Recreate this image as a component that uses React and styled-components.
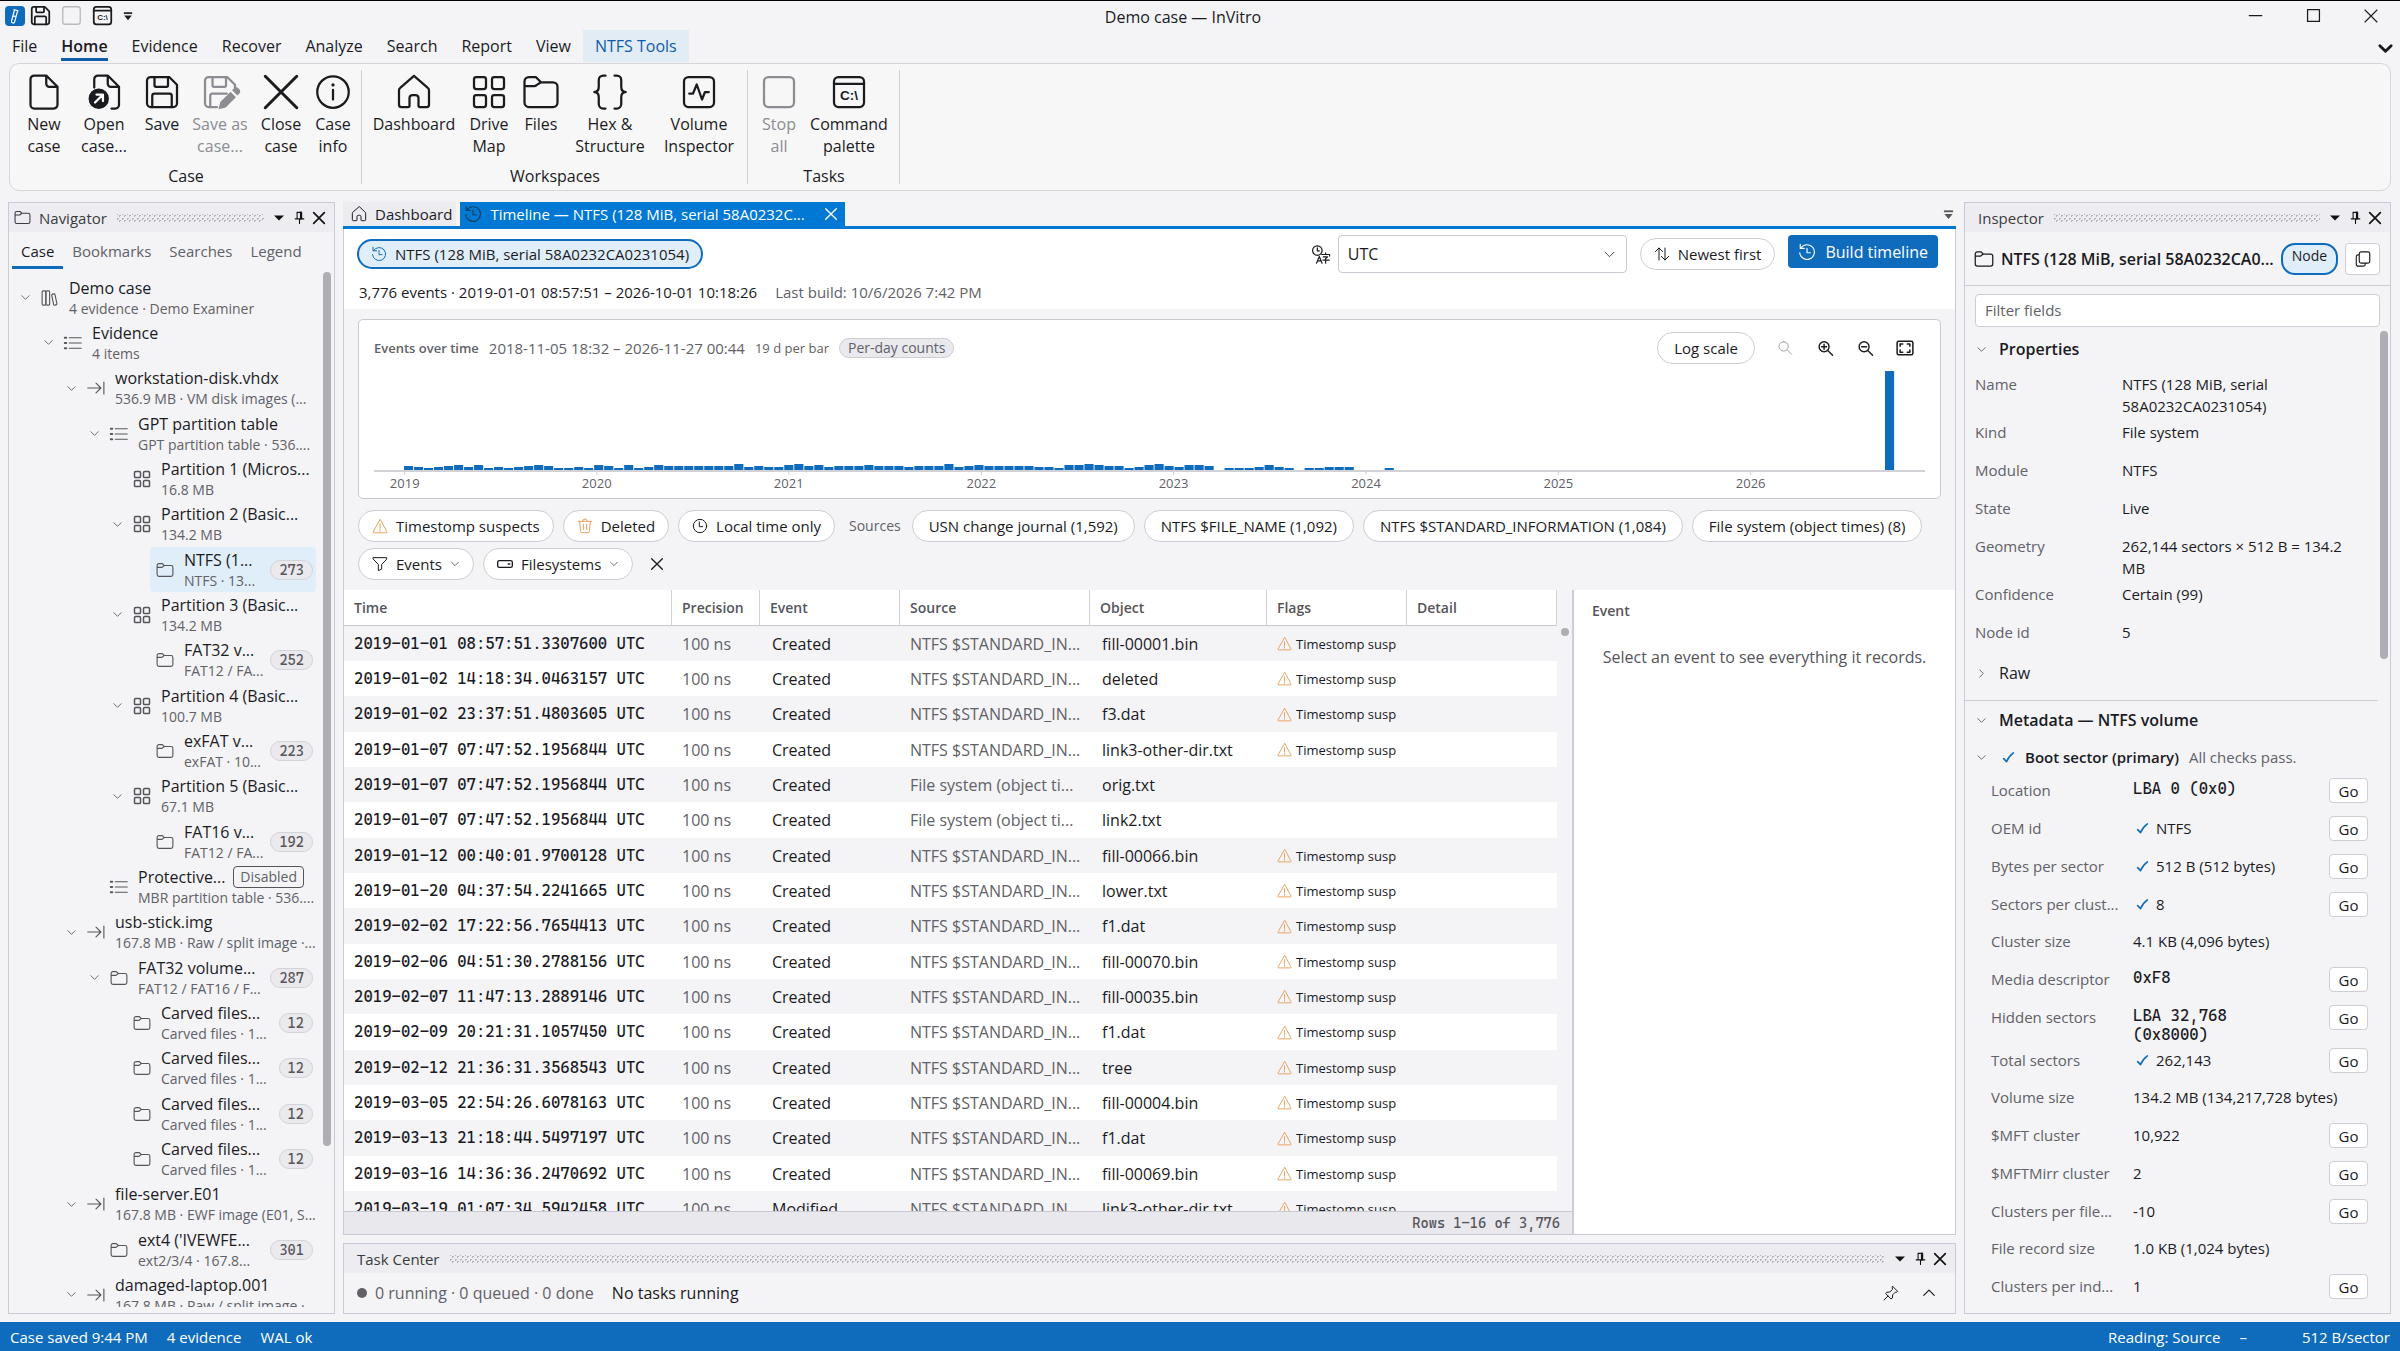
import React, { useState } from "react";
import styled, { createGlobalStyle, css } from "styled-components";

const sans = `"Segoe UI", "Open Sans", "Noto Sans", sans-serif`;
const mono = `"Cascadia Mono", "DejaVu Sans Mono", monospace`;

const ribbonGroups = [
  {
    name: "Case",
    buttons: [
      { icon: "doc", lines: ["New", "case"], width: 56 },
      { icon: "open", lines: ["Open", "case..."], width: 64 },
      { icon: "save", lines: ["Save"], width: 52 },
      { icon: "saveAs", lines: ["Save as", "case..."], width: 64, disabled: true },
      { icon: "closeBig", lines: ["Close", "case"], width: 58 },
      { icon: "info", lines: ["Case", "info"], width: 46 },
    ],
  },
  {
    name: "Workspaces",
    buttons: [
      { icon: "home", lines: ["Dashboard"], width: 92 },
      { icon: "grid", lines: ["Drive", "Map"], width: 58 },
      { icon: "folder", lines: ["Files"], width: 46 },
      { icon: "braces", lines: ["Hex &", "Structure"], width: 92 },
      { icon: "pulse", lines: ["Volume", "Inspector"], width: 86 },
    ],
  },
  {
    name: "Tasks",
    buttons: [
      { icon: "stop", lines: ["Stop", "all"], width: 50, disabled: true },
      { icon: "terminal", lines: ["Command", "palette"], width: 90 },
    ],
  },
];

const menu = ["File", "Home", "Evidence", "Recover", "Analyze", "Search", "Report", "View", "NTFS Tools"];

const tree = [
  { depth: 0, open: true, icon: "library", title: "Demo case", sub: "4 evidence · Demo Examiner" },
  { depth: 1, open: true, icon: "list", title: "Evidence", sub: "4 items" },
  { depth: 2, open: true, icon: "arrowBar", title: "workstation-disk.vhdx", sub: "536.9 MB · VM disk images (..." },
  { depth: 3, open: true, icon: "list", title: "GPT partition table", sub: "GPT partition table · 536...." },
  { depth: 4, icon: "grid", title: "Partition 1 (Micros...", sub: "16.8 MB" },
  { depth: 4, open: true, icon: "grid", title: "Partition 2 (Basic...", sub: "134.2 MB" },
  { depth: 5, icon: "folder", title: "NTFS (1...", sub: "NTFS · 13...", count: 273, selected: true },
  { depth: 4, open: true, icon: "grid", title: "Partition 3 (Basic...", sub: "134.2 MB" },
  { depth: 5, icon: "folder", title: "FAT32 v...", sub: "FAT12 / FA...", count: 252 },
  { depth: 4, open: true, icon: "grid", title: "Partition 4 (Basic...", sub: "100.7 MB" },
  { depth: 5, icon: "folder", title: "exFAT v...", sub: "exFAT · 10...", count: 223 },
  { depth: 4, open: true, icon: "grid", title: "Partition 5 (Basic...", sub: "67.1 MB" },
  { depth: 5, icon: "folder", title: "FAT16 v...", sub: "FAT12 / FA...", count: 192 },
  { depth: 3, icon: "list", title: "Protective...", sub: "MBR partition table · 536....", tag: "Disabled" },
  { depth: 2, open: true, icon: "arrowBar", title: "usb-stick.img", sub: "167.8 MB · Raw / split image ·..." },
  { depth: 3, open: true, icon: "folder", title: "FAT32 volume...", sub: "FAT12 / FAT16 / F...", count: 287 },
  { depth: 4, icon: "folder", title: "Carved files...", sub: "Carved files · 1...", count: 12 },
  { depth: 4, icon: "folder", title: "Carved files...", sub: "Carved files · 1...", count: 12 },
  { depth: 4, icon: "folder", title: "Carved files...", sub: "Carved files · 1...", count: 12 },
  { depth: 4, icon: "folder", title: "Carved files...", sub: "Carved files · 1...", count: 12 },
  { depth: 2, open: true, icon: "arrowBar", title: "file-server.E01", sub: "167.8 MB · EWF image (E01, S..." },
  { depth: 3, icon: "folder", title: "ext4 ('IVEWFE...", sub: "ext2/3/4 · 167.8...", count: 301 },
  { depth: 2, open: true, icon: "arrowBar", title: "damaged-laptop.001", sub: "167.8 MB · Raw / split image ·" },
];

const STD = "NTFS $STANDARD_IN...";
const FS = "File system (object ti...";
const events = [
  ["2019-01-01 08:57:51.3307600 UTC", "Created", STD, "fill-00001.bin", true],
  ["2019-01-02 14:18:34.0463157 UTC", "Created", STD, "deleted", true],
  ["2019-01-02 23:37:51.4803605 UTC", "Created", STD, "f3.dat", true],
  ["2019-01-07 07:47:52.1956844 UTC", "Created", STD, "link3-other-dir.txt", true],
  ["2019-01-07 07:47:52.1956844 UTC", "Created", FS, "orig.txt", false],
  ["2019-01-07 07:47:52.1956844 UTC", "Created", FS, "link2.txt", false],
  ["2019-01-12 00:40:01.9700128 UTC", "Created", STD, "fill-00066.bin", true],
  ["2019-01-20 04:37:54.2241665 UTC", "Created", STD, "lower.txt", true],
  ["2019-02-02 17:22:56.7654413 UTC", "Created", STD, "f1.dat", true],
  ["2019-02-06 04:51:30.2788156 UTC", "Created", STD, "fill-00070.bin", true],
  ["2019-02-07 11:47:13.2889146 UTC", "Created", STD, "fill-00035.bin", true],
  ["2019-02-09 20:21:31.1057450 UTC", "Created", STD, "f1.dat", true],
  ["2019-02-12 21:36:31.3568543 UTC", "Created", STD, "tree", true],
  ["2019-03-05 22:54:26.6078163 UTC", "Created", STD, "fill-00004.bin", true],
  ["2019-03-13 21:18:44.5497197 UTC", "Created", STD, "f1.dat", true],
  ["2019-03-16 14:36:36.2470692 UTC", "Created", STD, "fill-00069.bin", true],
  ["2019-03-19 01:07:34.5942458 UTC", "Modified", STD, "link3-other-dir.txt", true],
];

const columns = [
  { name: "Time", width: 328 },
  { name: "Precision", width: 88 },
  { name: "Event", width: 140 },
  { name: "Source", width: 190 },
  { name: "Object", width: 177 },
  { name: "Flags", width: 140 },
  { name: "Detail" },
];

const properties = [
  ["Name", "NTFS (128 MiB, serial 58A0232CA0231054)"],
  ["Kind", "File system"],
  ["Module", "NTFS"],
  ["State", "Live"],
  ["Geometry", "262,144 sectors × 512 B = 134.2 MB"],
  ["Confidence", "Certain (99)"],
  ["Node id", "5"],
];

const bootFields = [
  { label: "Location", value: "LBA 0 (0x0)", mono: true, go: true },
  { label: "OEM id", value: "NTFS", check: true, go: true },
  { label: "Bytes per sector", value: "512 B (512 bytes)", check: true, go: true },
  { label: "Sectors per clust...", value: "8", check: true, go: true },
  { label: "Cluster size", value: "4.1 KB (4,096 bytes)" },
  { label: "Media descriptor", value: "0xF8", mono: true, go: true },
  { label: "Hidden sectors", value: "LBA 32,768 (0x8000)", mono: true, go: true },
  { label: "Total sectors", value: "262,143", check: true, go: true },
  { label: "Volume size", value: "134.2 MB (134,217,728 bytes)" },
  { label: "$MFT cluster", value: "10,922", go: true },
  { label: "$MFTMirr cluster", value: "2", go: true },
  { label: "Clusters per file...", value: "-10", go: true },
  { label: "File record size", value: "1.0 KB (1,024 bytes)" },
  { label: "Clusters per ind...", value: "1", go: true },
];

// one digit per 19 day bucket, "0" is an empty bucket
const buckets =
  "000" +
  "4323453523234542232542523544444446343356" +
  "453444544434446345444443325565442356435" +
  "540222353202233300020";
const BUCKET_COUNT = 155;
const bars = buckets
  .split("")
  .map((h, i) => [i, Number(h)])
  .filter(([, h]) => h > 0);
bars.push([151, 99]);

const years = [
  ["2019", 1.98],
  ["2020", 14.36],
  ["2021", 26.74],
  ["2022", 39.16],
  ["2023", 51.55],
  ["2024", 63.96],
  ["2025", 76.36],
  ["2026", 88.76],
];

const clock = (
  <>
    <path d="M4 6.5A9.8 9.8 0 1 1 2.3 13" />
    <path d="M3 1.8v5.4h5.4M12 7v6h4.5" />
  </>
);
const lens = <path d="M10 2.5a7 7 0 1 0 0 14 7 7 0 0 0 0-14zM15.2 14.7L22 21.5" />;

const drawings = {
  doc: <path d="M5.500 1h8L21 8.500v12a2.500 2.500 0 0 1-2.500 2.500h-13A2.500 2.500 0 0 1 3 20.500v-17A2.500 2.500 0 0 1 5.500 1zM13.500 1v5.500a2 2 0 0 0 2 2H21" />,
  open: (
    <>
      <path d="M5.500 9V3.500A2.500 2.500 0 0 1 8 1h6.500L22 8.500v12a2.500 2.500 0 0 1-2.500 2.500H17M14.500 1v5.500a2 2 0 0 0 2 2H22" />
      <circle cx="8.500" cy="16.500" r="6.800" fill="currentColor" stroke="none" />
      <path d="M6 19l5-5M7 13.700h4.300V18" stroke="#fff" />
    </>
  ),
  save: (
    <>
      <path d="M4.500 2h12.300L22 7.200v12.300a2.500 2.500 0 0 1-2.500 2.500h-15A2.500 2.500 0 0 1 2 19.500v-15A2.500 2.500 0 0 1 4.500 2z" />
      <path d="M7 2v5.500a1 1 0 0 0 1 1h7a1 1 0 0 0 1-1V2M5.500 22v-7.500A1.500 1.500 0 0 1 7 13h10a1.500 1.500 0 0 1 1.500 1.500V22" />
    </>
  ),
  saveAs: (
    <>
      <path d="M10 22H4.500A2.500 2.500 0 0 1 2 19.500v-15A2.500 2.500 0 0 1 4.500 2h12.300L22 7.200V9" />
      <path d="M7 2v5.500a1 1 0 0 0 1 1h7a1 1 0 0 0 1-1V2M5.500 22v-7.500A1.500 1.500 0 0 1 7 13h9.500" />
      <path d="M11 23.500l1.200-4.800 6.800-6.800 3.600 3.600-6.800 6.800zM20 10.800l1-1a2.500 2.500 0 0 1 3.600 3.600l-1 1z" fill="currentColor" stroke="none" />
    </>
  ),
  closeBig: <path d="M1.500 1.500l21 21M22.500 1.500l-21 21" strokeWidth="2" />,
  close: <path d="M4 4l16 16M20 4L4 20" />,
  info: (
    <>
      <circle cx="12" cy="12" r="10.500" />
      <path d="M12 10.500V17" />
      <circle cx="12" cy="7.300" r="1.100" fill="currentColor" stroke="none" />
    </>
  ),
  home: <path d="M12 1.300L2.800 9.200a2 2 0 0 0-.8 1.600v9.700A1.500 1.500 0 0 0 3.500 22H8a1 1 0 0 0 1-1v-5a2 2 0 0 1 2-2h2a2 2 0 0 1 2 2v5a1 1 0 0 0 1 1h4.500a1.500 1.500 0 0 0 1.500-1.500v-9.700a2 2 0 0 0-.8-1.600z" />,
  grid: (
    <>
      <rect x="2" y="2" width="8" height="8" rx="1.500" />
      <rect x="14" y="2" width="8" height="8" rx="1.500" />
      <rect x="2" y="14" width="8" height="8" rx="1.500" />
      <rect x="14" y="14" width="8" height="8" rx="1.500" />
    </>
  ),
  folder: <path d="M1 6V5a3 3 0 0 1 3-3h4.500l3.500 3.500h8a3 3 0 0 1 3 3V19a3 3 0 0 1-3 3H4a3 3 0 0 1-3-3zM1 8h6.500a2 2 0 0 0 1.500-.6L12 5.500" />,
  folderFlat: <path d="M1.500 7V6A2.500 2.500 0 0 1 4 3.500h4.500L11 6h9a2.500 2.500 0 0 1 2.500 2.500V18a2.500 2.500 0 0 1-2.500 2.500H4A2.500 2.500 0 0 1 1.500 18zM1.500 8.500H8L11 6" />,
  braces: <path d="M9 1H7.500A3 3 0 0 0 4.500 4v4.500C4.500 10.500 3.500 12 1.500 12c2 0 3 1.500 3 3.500V20a3 3 0 0 0 3 3H9M15 1h1.500a3 3 0 0 1 3 3v4.500c0 2 1 3.500 3 3.500-2 0-3 1.500-3 3.500V20a3 3 0 0 1-3 3H15" />,
  pulse: (
    <>
      <rect x="2" y="2" width="20" height="20" rx="3" />
      <path d="M5.500 13H8l2.500-6 3.500 10 2-5h2.500" />
    </>
  ),
  stop: <rect x="2" y="2" width="20" height="20" rx="3" />,
  terminal: (
    <>
      <rect x="2" y="2" width="20" height="20" rx="3" />
      <path d="M2 6.500h20" />
      <text x="12" y="17.500" textAnchor="middle" fontSize="9" fontWeight="700" fontFamily="Liberation Sans" fill="currentColor" stroke="none">
        C:\
      </text>
    </>
  ),
  library: (
    <>
      <rect x="1.500" y="2.500" width="5" height="19" rx="1.500" />
      <rect x="6.500" y="2.500" width="5" height="19" rx="1.500" />
      <rect x="15.500" y="6.500" width="4.500" height="15" rx="1.500" transform="rotate(-12 18 14)" />
    </>
  ),
  list: (
    <>
      <path d="M7 5h16M7 12h16M7 19h16" />
      <path d="M1 5h2M1 12h2M1 19h2" strokeWidth="2.500" />
    </>
  ),
  arrowBar: <path d="M1 12h17M12 5.500l6.500 6.500-6.500 6.500M22.500 4v16" />,
  clock,
  clockPlain: (
    <>
      <circle cx="12" cy="12" r="10" />
      <path d="M11 6v7h5" />
    </>
  ),
  warning: (
    <>
      <path d="M12 2.500L1.500 21a.8.8 0 0 0 .7 1.200h19.600a.8.8 0 0 0 .7-1.200z" />
      <path d="M12 9v6.500M12 17.500v2" />
    </>
  ),
  trash: <path d="M2 5h20M8.500 5a3.500 3.500 0 0 1 7 0M4 5l1.500 15.500A2 2 0 0 0 7.500 22h9a2 2 0 0 0 2-1.500L20 5M9.500 9.500v8M14.500 9.500v8" />,
  funnel: <path d="M2 2.500h20v2.300l-7.500 8v6.700l-5 2.500v-9.200L2 4.800z" />,
  drive: (
    <>
      <rect x="1" y="7" width="22" height="10" rx="2.500" />
      <path d="M17 12h2" strokeWidth="2.500" />
    </>
  ),
  chevron: <path d="M4 8l8 8 8-8" />,
  chevronUp: <path d="M3 16l9-9 9 9" />,
  chevronRight: <path d="M8 4l8 8-8 8" />,
  sort: <path d="M7.500 21V3M2 8.500L7.500 3 13 8.500M16.500 3v18M11 15.500l5.500 5.500 5.500-5.500" />,
  lens,
  zoomIn: (
    <>
      {lens}
      <path d="M6.500 9.500h7M10 6v7" />
    </>
  ),
  zoomOut: (
    <>
      {lens}
      <path d="M6.500 9.500h7" />
    </>
  ),
  fit: (
    <>
      <rect x="1.500" y="3" width="21" height="18" rx="2" />
      <path d="M5.500 9.500v-3H9M15 6.500h3.500v3M18.500 14.500v3H15M9 17.500H5.500v-3" />
    </>
  ),
  copy: <path d="M9.500 2.500h9A2.500 2.500 0 0 1 21 5v10a2.500 2.500 0 0 1-2.500 2.500h-9A2.500 2.500 0 0 1 7 15V5a2.500 2.500 0 0 1 2.500-2.500zM7 6.500H5.500A2.500 2.500 0 0 0 3 9v9.500A3 3 0 0 0 6 21.500h6.500a2.500 2.500 0 0 0 2.500-2.500v-1.500" />,
  check: <path d="M3 14l5.500 5.500C11 13 15 8 21 3.500" strokeWidth="3" />,
  pushpin: <path d="M14.500 2l7.500 7.500-2 1.500-1.500-.2-4 4-.5 4.700-2 1.500-8-8 1.500-2 4.700-.5 4-4-.2-2zM7.500 16.500L1.500 22.500" />,
  pinUp: (
    <>
      <path d="M7.500 2.500h8.500v11.500M7.500 2.500v11.500M4 14.500h16M12 14.500V23" />
      <path d="M14.500 2.500v12" strokeWidth="3.500" />
    </>
  ),
  caret: <path d="M0 6h24L12 18z" fill="currentColor" stroke="none" />,
  caretBar: (
    <>
      <path d="M2 3h20v4H2z" fill="currentColor" stroke="none" />
      <path d="M3 11h18l-9 11z" fill="currentColor" stroke="none" />
    </>
  ),
  translate: (
    <>
      <circle cx="8" cy="7" r="6" />
      <path d="M8 3.500V7.500h2.500M7 23l3.500-8.500L14 23M8.500 20h4M13.500 12h10v2M18.500 10v2M15.500 15h5.500l-2.500 2v6M15 19h8" />
    </>
  ),
  minimize: <path d="M2 12h20" />,
  maximize: <rect x="2.500" y="2.500" width="19" height="19" />,
};

function Icon({ name, size = 18, weight = 1.5, color }) {
  return (
    <IconSvg viewBox="0 0 24 24" width={size} height={size} strokeWidth={weight} $color={color} aria-hidden="true">
      {drawings[name]}
    </IconSvg>
  );
}

function PanelHeader({ title, icon }) {
  return (
    <HeaderBar>
      {icon && <Icon name={icon} size={17} weight={1.5} />}
      <span>{title}</span>
      <Grip />
      <HeaderButton aria-label="Window position">
        <Icon name="caret" size={10} />
      </HeaderButton>
      <HeaderButton aria-label="Auto hide">
        <Icon name="pinUp" size={13} weight={2} />
      </HeaderButton>
      <HeaderButton aria-label="Close">
        <Icon name="close" size={16} weight={2.5} />
      </HeaderButton>
    </HeaderBar>
  );
}

function Ribbon() {
  return (
    <RibbonBox>
      {ribbonGroups.map((group) => (
        <RibbonGroup key={group.name}>
          <RibbonButtons>
            {group.buttons.map((b) => (
              <RibbonButton key={b.icon} disabled={b.disabled} $width={b.width}>
                <Icon name={b.icon} size={36} />
                {b.lines.map((line) => (
                  <span key={line}>{line}</span>
                ))}
              </RibbonButton>
            ))}
          </RibbonButtons>
          <RibbonLabel>{group.name}</RibbonLabel>
        </RibbonGroup>
      ))}
    </RibbonBox>
  );
}

function Navigator() {
  return (
    <Panel>
      <PanelHeader title="Navigator" icon="folderFlat" />
      <NavTabs>
        {["Case", "Bookmarks", "Searches", "Legend"].map((t, i) => (
          <NavTab key={t} $active={i === 0}>
            {t}
          </NavTab>
        ))}
      </NavTabs>
      <TreeArea>
        <Tree>
          {tree.map((node, i) => (
            <TreeRow key={i} $depth={node.depth}>
              <Chevron>{node.open && <Icon name="chevron" size={11} weight={2} />}</Chevron>
              <TreeItem $selected={node.selected}>
                <Icon name={node.icon === "folder" ? "folderFlat" : node.icon} size={18} weight={node.icon === "grid" ? 2 : 1.5} />
                <TreeText>
                  <TreeTitle>
                    {node.title}
                    {node.tag && <Tag>{node.tag}</Tag>}
                  </TreeTitle>
                  <TreeSub>{node.sub}</TreeSub>
                </TreeText>
                {node.count && <Count>{node.count}</Count>}
              </TreeItem>
            </TreeRow>
          ))}
        </Tree>
        <Thumb $height={874} />
      </TreeArea>
    </Panel>
  );
}

function Histogram() {
  return (
    <Chart role="img" aria-label="Events over time">
      {bars.map(([i, h]) => (
        <rect key={i} x={`${(i * 100) / BUCKET_COUNT}%`} y={99 - h} width="0.59%" height={h} fill="#0f6cbd" />
      ))}
      <line x1="0" x2="100%" y1="100" y2="100" stroke="#d1d1d6" strokeWidth="2" />
      {years.map(([year, x]) => (
        <React.Fragment key={year}>
          <line x1={`${x}%`} x2={`${x}%`} y1="100" y2="104" stroke="#d1d1d6" />
          <text x={`${x}%`} y="117" textAnchor="middle">
            {year}
          </text>
        </React.Fragment>
      ))}
    </Chart>
  );
}

function EventTable() {
  return (
    <TableColumn>
      <TableScroll>
        <Table>
          <colgroup>
            {columns.map((c) => (
              <col key={c.name} width={c.width} />
            ))}
          </colgroup>
          <thead>
            <tr>
              {columns.map((c) => (
                <Th key={c.name}>{c.name}</Th>
              ))}
            </tr>
          </thead>
          <tbody>
            {events.map(([time, event, source, object, flagged], i) => (
              <Tr key={i}>
                <Td $mono>{time}</Td>
                <Td $muted>100 ns</Td>
                <Td $indent>{event}</Td>
                <Td $muted>{source}</Td>
                <Td $indent>{object}</Td>
                <Td>
                  {flagged && (
                    <Flag>
                      <Icon name="warning" size={15} color="#e8a05c" />
                      Timestomp susp
                    </Flag>
                  )}
                </Td>
                <Td />
              </Tr>
            ))}
          </tbody>
        </Table>
        <TableBar>
          <Thumb $height={8} />
        </TableBar>
      </TableScroll>
      <TableFooter>Rows 1–16 of 3,776</TableFooter>
    </TableColumn>
  );
}

function Timeline() {
  const [zone, setZone] = useState("UTC");
  return (
    <Document>
      <DocTabs>
        <DocTab>
          <Icon name="home" size={16} />
          Dashboard
        </DocTab>
        <DocTab $active>
          <Icon name="clock" size={18} color="#10405f" />
          Timeline — NTFS (128 MiB, serial 58A0232C...
          <Icon name="close" size={16} weight={2} />
        </DocTab>
        <TabMenu aria-label="Open documents">
          <Icon name="caretBar" size={11} color="#55555c" />
        </TabMenu>
      </DocTabs>
      <DocBody>
        <Toolbar>
          <ToolRow>
            <Pill $active>
              <Icon name="clock" size={16} color="#0f6cbd" />
              NTFS (128 MiB, serial 58A0232CA0231054)
            </Pill>
            <Spacer />
            <ZoneField>
              <Icon name="translate" size={19} weight={1.5} />
              <SelectBox>
                <select aria-label="Time zone" value={zone} onChange={(e) => setZone(e.target.value)}>
                  <option>UTC</option>
                  <option>Local</option>
                </select>
                <Icon name="chevron" size={13} />
              </SelectBox>
            </ZoneField>
            <Pill>
              <Icon name="sort" size={16} />
              Newest first
            </Pill>
            <PrimaryButton>
              <Icon name="clock" size={18} />
              Build timeline
            </PrimaryButton>
          </ToolRow>
          <Summary>
            3,776 events · 2019-01-01 08:57:51 – 2026-10-01 10:18:26
            <span>Last build: 10/6/2026 7:42 PM</span>
          </Summary>
        </Toolbar>
        <Card>
          <CardHead>
            <strong>Events over time</strong>
            <Range>2018-11-05 18:32 – 2026-11-27 00:44</Range>
            <span>19 d per bar</span>
            <Hint>Per-day counts</Hint>
            <Spacer />
            <Pill $plain>Log scale</Pill>
            <ZoomButton aria-label="Zoom to selection" disabled>
              <Icon name="lens" size={16} />
            </ZoomButton>
            <ZoomButton aria-label="Zoom in">
              <Icon name="zoomIn" size={17} weight={2} />
            </ZoomButton>
            <ZoomButton aria-label="Zoom out">
              <Icon name="zoomOut" size={17} weight={2} />
            </ZoomButton>
            <ZoomButton aria-label="Fit">
              <Icon name="fit" size={18} weight={2} />
            </ZoomButton>
          </CardHead>
          <Histogram />
        </Card>
        <Filters>
          <Pill>
            <Icon name="warning" size={16} color="#e8a05c" />
            Timestomp suspects
          </Pill>
          <Pill>
            <Icon name="trash" size={16} color="#e8a05c" />
            Deleted
          </Pill>
          <Pill>
            <Icon name="clockPlain" size={16} />
            Local time only
          </Pill>
          <FilterLabel>Sources</FilterLabel>
          <Pill $plain>USN change journal (1,592)</Pill>
          <Pill $plain>NTFS $FILE_NAME (1,092)</Pill>
          <Pill $plain>NTFS $STANDARD_INFORMATION (1,084)</Pill>
          <Pill $plain>File system (object times) (8)</Pill>
        </Filters>
        <Filters>
          <Pill>
            <Icon name="funnel" size={16} />
            Events
            <Icon name="chevron" size={10} />
          </Pill>
          <Pill>
            <Icon name="drive" size={16} weight={2} />
            Filesystems
            <Icon name="chevron" size={10} />
          </Pill>
          <ZoomButton aria-label="Clear filters">
            <Icon name="close" size={16} weight={2} />
          </ZoomButton>
        </Filters>
        <Split>
          <EventTable />
          <EventDetail>
            <h3>Event</h3>
            <p>Select an event to see everything it records.</p>
          </EventDetail>
        </Split>
      </DocBody>
    </Document>
  );
}

function TaskCenter() {
  return (
    <Panel>
      <PanelHeader title="Task Center" />
      <TaskRow>
        <Dot />
        <Muted>0 running · 0 queued · 0 done</Muted>
        <span>No tasks running</span>
        <Spacer />
        <TaskButton aria-label="Pin">
          <Icon name="pushpin" size={16} />
        </TaskButton>
        <TaskButton aria-label="Expand">
          <Icon name="chevronUp" size={14} weight={2} />
        </TaskButton>
      </TaskRow>
    </Panel>
  );
}

function Inspector() {
  const [filter, setFilter] = useState("");
  return (
    <Panel>
      <PanelHeader title="Inspector" />
      <InspectorTitle>
        <Icon name="folderFlat" size={20} />
        <strong>NTFS (128 MiB, serial 58A0232CA0...</strong>
        <NodeButton>Node</NodeButton>
        <CopyButton aria-label="Copy">
          <Icon name="copy" size={18} />
        </CopyButton>
      </InspectorTitle>
      <FilterInput
        type="text"
        aria-label="Filter fields"
        placeholder="Filter fields"
        value={filter}
        onChange={(e) => setFilter(e.target.value)}
      />
      <InspectorArea>
        <InspectorBody>
          <Section $height={36} $bold>
            <Icon name="chevron" size={11} weight={2} />
            Properties
          </Section>
          <PropertyList>
            {properties.map(([label, value]) => (
              <Property key={label}>
                <dt>{label}</dt>
                <dd>{value}</dd>
              </Property>
            ))}
          </PropertyList>
          <Section $height={36}>
            <Icon name="chevronRight" size={11} weight={2} />
            Raw
          </Section>
          <Rule />
          <Section $height={38} $bold>
            <Icon name="chevron" size={11} weight={2} />
            Metadata — NTFS volume
          </Section>
          <Section $height={36} $bold>
            <Icon name="chevron" size={11} weight={2} />
            <BootTitle>
              <Icon name="check" size={13} color="#0f6cbd" />
              Boot sector (primary)
              <Muted>All checks pass.</Muted>
            </BootTitle>
          </Section>
          <FieldList>
            {bootFields.map((f) => (
              <Field key={f.label}>
                <dt>{f.label}</dt>
                <FieldValue $mono={f.mono} $wide={!f.go}>
                  {f.check && <Icon name="check" size={13} color="#0f6cbd" />}
                  {f.value}
                </FieldValue>
                {f.go && (
                  <GoCell>
                    <GoButton>Go</GoButton>
                  </GoCell>
                )}
              </Field>
            ))}
          </FieldList>
        </InspectorBody>
        <Thumb $height={328} />
      </InspectorArea>
    </Panel>
  );
}

export default function App() {
  return (
    <Shell>
      <Global />
      <TitleBar>
        <QuickAccess>
          <AppMark viewBox="0 0 20 20" width="20" height="20" aria-hidden="true">
            <rect width="20" height="20" rx="4" fill="#0f6cbd" />
            <path d="M8.500 3.500l5 1.300M9.500 4L6.500 15a1.600 1.600 0 0 0 3.100.8l3-11M8 9.800l3.200.8" fill="none" stroke="#fff" strokeWidth="1.200" />
          </AppMark>
          <QuickButton aria-label="Save">
            <Icon name="save" size={21} weight={2} />
          </QuickButton>
          <QuickButton aria-label="Stop" disabled>
            <Icon name="stop" size={21} />
          </QuickButton>
          <QuickButton aria-label="Command palette">
            <Icon name="terminal" size={21} weight={2} />
          </QuickButton>
          <QuickButton aria-label="Customize">
            <Icon name="caretBar" size={10} />
          </QuickButton>
        </QuickAccess>
        <Title>Demo case — InVitro</Title>
        <WindowButtons>
          <WindowButton aria-label="Minimize">
            <Icon name="minimize" size={15} weight={2} />
          </WindowButton>
          <WindowButton aria-label="Maximize">
            <Icon name="maximize" size={15} weight={2} />
          </WindowButton>
          <WindowButton aria-label="Close window">
            <Icon name="close" size={18} />
          </WindowButton>
        </WindowButtons>
      </TitleBar>
      <MenuBar>
        {menu.map((m) => (
          <MenuTab key={m} $active={m === "Home"} $context={m === "NTFS Tools"}>
            <span>{m}</span>
          </MenuTab>
        ))}
        <Spacer />
        <CollapseButton aria-label="Collapse ribbon">
          <Icon name="chevron" size={17} weight={4} />
        </CollapseButton>
      </MenuBar>
      <Ribbon />
      <Workspace>
        <Navigator />
        <Center>
          <Timeline />
          <TaskCenter />
        </Center>
        <Inspector />
      </Workspace>
      <StatusBar>
        <span>Case saved 9:44 PM</span>
        <span>4 evidence</span>
        <span>WAL ok</span>
        <Spacer />
        <span>Reading: Source</span>
        <span>–</span>
        <Sector>512 B/sector</Sector>
      </StatusBar>
    </Shell>
  );
}

const Global = createGlobalStyle`
  * {
    box-sizing: border-box;
  }
  body {
    margin: 0;
    background: #f4f4f7;
    color: #1b1b1f;
    font: 16px/22px ${sans};
    white-space: nowrap;
  }
  button, input, select {
    font: inherit;
    color: inherit;
  }
  button {
    margin: 0;
    padding: 0;
    border: 0;
    background: none;
  }
  strong {
    font-weight: 600;
  }
  dl, dd, h3, p {
    margin: 0;
  }
`;

const Shell = styled.div`
  height: 100vh;
  display: flex;
  flex-direction: column;
  border-top: 1px solid #000;
`;
const IconSvg = styled.svg`
  flex: none;
  fill: none;
  stroke: currentColor;
  stroke-linecap: round;
  stroke-linejoin: round;
  overflow: visible;
  color: ${(props) => props.$color || "inherit"};
`;
const Spacer = styled.div`
  flex: 1;
`;
const Muted = styled.span`
  color: #616167;
  font-weight: 400;
`;

const TitleBar = styled.header`
  display: grid;
  grid-template-columns: 1fr auto 1fr;
  align-items: center;
  height: 29px;
`;
const QuickAccess = styled.div`
  display: flex;
  align-items: center;
  padding-left: 5px;
`;
const AppMark = styled.svg`
  margin-right: 5px;
`;
const QuickButton = styled.button`
  display: flex;
  margin-right: 10px;
  &:disabled {
    color: #b9b9be;
  }
`;
const Title = styled.div`
  margin-right: 34px;
  padding-top: 2px;
`;
const WindowButtons = styled.div`
  display: flex;
  justify-content: flex-end;
`;
const WindowButton = styled.button`
  display: flex;
  align-items: center;
  justify-content: center;
  width: 58px;
  height: 28px;
`;

const MenuBar = styled.nav`
  display: flex;
  height: 33px;
`;
const MenuTab = styled.button`
  padding: 0 12px;
  height: 32px;
  span {
    display: block;
    height: 30px;
    line-height: 30px;
    ${(props) =>
      props.$active &&
      css`
        font-weight: 600;
        border-bottom: 3px solid #0f5cab;
      `}
  }
  ${(props) =>
    props.$context &&
    css`
      background: #e1ecf4;
      color: #0f5cab;
    `}
`;
const CollapseButton = styled.button`
  width: 29px;
  display: flex;
  align-items: center;
  justify-content: center;
  padding-top: 4px;
`;

const RibbonBox = styled.div`
  display: flex;
  margin: 0 9px 11px;
  padding: 6px 0;
  border: 1px solid #d6d6da;
  border-radius: 10px;
  background: #f7f7f7;
`;
const RibbonGroup = styled.section`
  display: flex;
  flex-direction: column;
  justify-content: space-between;
  height: 114px;
  padding: 4px 5px 0 6px;
  border-right: 1px solid #d0d0d4;
`;
const RibbonButtons = styled.div`
  display: flex;
`;
const RibbonButton = styled.button`
  display: flex;
  flex-direction: column;
  align-items: center;
  width: ${(props) => props.$width}px;
  svg {
    margin-bottom: 3px;
  }
  &:disabled {
    color: #8c8c92;
  }
`;
const RibbonLabel = styled.div`
  text-align: center;
  line-height: 16px;
`;

const Workspace = styled.main`
  flex: 1;
  min-height: 0;
  display: grid;
  grid-template-columns: 327px minmax(0, 1fr) 427px;
  gap: 8px;
  padding: 0 9px 8px 8px;
`;
const Center = styled.div`
  display: flex;
  flex-direction: column;
  gap: 8px;
  min-height: 0;
`;
const Panel = styled.section`
  display: flex;
  flex-direction: column;
  min-height: 0;
  border: 1px solid #c9cad8;
  background: #f4f4f7;
`;
const HeaderBar = styled.div`
  display: flex;
  align-items: center;
  height: 29px;
  flex: none;
  padding: 0 5px;
  background: #ededf1;
  color: #3b3b40;
  font-size: 15px;
  span {
    margin: 0 10px 0 8px;
  }
`;
const Grip = styled.div`
  flex: 1;
  height: 8px;
  margin-right: 5px;
  background-image: radial-gradient(#b4b4b9 1px, transparent 1px), radial-gradient(#b4b4b9 1px, transparent 1px);
  background-size: 5px 5px;
  background-position: 0 -1px, 3px 2px;
`;
const HeaderButton = styled.button`
  display: flex;
  align-items: center;
  justify-content: center;
  width: 20px;
  height: 20px;
  color: #111;
`;

const NavTabs = styled.div`
  display: flex;
  flex: none;
  padding: 3px 3px 0;
`;
const NavTab = styled.button`
  height: 34px;
  padding: 0 9px;
  border-bottom: 3px solid transparent;
  color: #616167;
  font-size: 15px;
  ${(props) =>
    props.$active &&
    css`
      color: #1b1b1f;
      border-color: #0f6cbd;
    `}
`;
const TreeArea = styled.div`
  flex: 1;
  display: flex;
  min-height: 0;
  margin: 3px 3px 6px 11px;
`;
const Tree = styled.div`
  flex: 1;
  min-width: 0;
  overflow: hidden;
  padding-top: 3px;
  margin-right: 7px;
`;
const TreeRow = styled.div`
  display: flex;
  height: 45px;
  padding-left: ${(props) => props.$depth * 23}px;
  &:nth-child(3n) {
    height: 46px;
  }
`;
const Chevron = styled.span`
  width: 14px;
  display: flex;
  align-items: center;
  color: #616167;
`;
const TreeItem = styled.div`
  flex: 1;
  min-width: 0;
  display: flex;
  align-items: center;
  gap: 10px;
  margin-left: 1px;
  padding: 0 3px 0 6px;
  border-radius: 4px;
  color: #55555b;
  background: ${(props) => (props.$selected ? "#e0eefa" : "transparent")};
`;
const TreeText = styled.div`
  flex: 1;
  min-width: 0;
`;
const TreeTitle = styled.div`
  display: flex;
  justify-content: space-between;
  color: #1b1b1f;
  line-height: 22px;
`;
const TreeSub = styled.div`
  color: #616167;
  font-size: 14px;
  line-height: 20px;
`;
const Count = styled.span`
  padding: 0 8px;
  border: 1px solid #d3d3d8;
  border-radius: 10px;
  background: #e9e9ee;
  color: #55555b;
  font: 14px/18px ${mono};
`;
const Tag = styled.span`
  margin-right: 9px;
  padding: 0 6px;
  border: 1px solid #55555b;
  border-radius: 4px;
  color: #616167;
  font-size: 14px;
  line-height: 19px;
`;
const Thumb = styled.div`
  flex: none;
  width: 8px;
  height: ${(props) => props.$height}px;
  border-radius: 4px;
  background: #aeaeb4;
`;

const Document = styled.section`
  flex: 1;
  min-height: 0;
  display: flex;
  flex-direction: column;
`;
const DocTabs = styled.div`
  display: flex;
  gap: 4px;
  border-bottom: 3px solid #0078d4;
`;
const DocTab = styled.button`
  display: flex;
  align-items: center;
  gap: 8px;
  height: 24px;
  padding: 0 4px 0 8px;
  background: #ececf0;
  font-size: 15px;
  line-height: 20px;
  ${(props) =>
    props.$active &&
    css`
      padding: 0 6px 0 4px;
      background: #0078d4;
      color: #fff;
      svg:last-child {
        margin-left: 10px;
      }
    `}
`;
const TabMenu = styled.button`
  display: flex;
  align-items: center;
  margin-left: auto;
  padding-right: 2px;
`;
const DocBody = styled.div`
  flex: 1;
  min-height: 0;
  display: flex;
  flex-direction: column;
  border: 1px solid #c9cad8;
  border-top: 0;
`;
const Toolbar = styled.div`
  padding: 6px 17px 6px 13px;
  background: #fff;
`;
const ToolRow = styled.div`
  display: flex;
  align-items: center;
  height: 38px;
  gap: 13px;
`;
const Pill = styled.button`
  display: flex;
  align-items: center;
  gap: 8px;
  height: 32px;
  padding: 0 ${(props) => (props.$plain ? 16 : 13)}px;
  border: 1px solid #cdcdd3;
  border-radius: 16px;
  background: #fff;
  font-size: 15px;
  ${(props) =>
    props.$active &&
    css`
      height: 30px;
      padding: 0 12px;
      border: 2px solid #0f6cbd;
      background: #e0eefa;
    `}
`;
const ZoneField = styled.div`
  display: flex;
  align-items: center;
  gap: 8px;
`;
const SelectBox = styled.div`
  display: flex;
  align-items: center;
  width: 289px;
  height: 38px;
  padding-right: 10px;
  border: 1px solid #c9c9d2;
  border-radius: 4px;
  background: #fff;
  select {
    flex: 1;
    height: 100%;
    padding: 0 9px;
    border: 0;
    background: transparent;
    appearance: none;
  }
`;
const PrimaryButton = styled.button`
  display: flex;
  align-items: center;
  align-self: flex-start;
  gap: 9px;
  height: 33px;
  padding: 0 10px;
  border-radius: 4px;
  background: #0f6cbd;
  color: #fff;
`;
const Summary = styled.div`
  display: flex;
  gap: 18px;
  padding: 8px 2px 0;
  font-size: 15px;
  span {
    color: #616167;
  }
`;
const Card = styled.section`
  margin: 10px 14px 11px;
  padding: 12px 15px 5px;
  border: 1px solid #c9c9d2;
  border-radius: 5px;
  background: #fff;
`;
const CardHead = styled.div`
  display: flex;
  align-items: center;
  gap: 10px;
  padding-right: 5px;
  color: #616167;
  font-size: 13px;
  ${Pill} {
    color: #1b1b1f;
    margin-right: 5px;
  }
`;
const Range = styled.span`
  font-size: 15px;
`;
const Hint = styled.span`
  padding: 0 8px;
  border: 1px solid #cdcdd3;
  border-radius: 10px;
  background: #e9e9ee;
  font-size: 14px;
  line-height: 18px;
`;
const ZoomButton = styled.button`
  display: flex;
  align-items: center;
  justify-content: center;
  width: 30px;
  height: 32px;
  color: #1b1b1f;
  &:disabled {
    color: #a0a0a6;
  }
`;
const Chart = styled.svg`
  display: block;
  width: 100%;
  height: 122px;
  margin-top: 7px;
  text {
    font: 13px ${sans};
    fill: #616167;
  }
`;
const Filters = styled.div`
  display: flex;
  align-items: center;
  gap: 9px;
  padding: 0 14px 6px;
`;
const FilterLabel = styled.span`
  padding: 0 2px 0 5px;
  color: #616167;
  font-size: 14px;
`;

const Split = styled.div`
  flex: 1;
  min-height: 0;
  display: flex;
  margin-top: 4px;
`;
const TableColumn = styled.div`
  flex: 1;
  min-width: 0;
  display: flex;
  flex-direction: column;
`;
const TableScroll = styled.div`
  flex: 1;
  min-height: 0;
  display: flex;
  align-items: flex-start;
  overflow: hidden;
`;
const TableBar = styled.div`
  width: 15px;
  padding: 38px 3px 0 4px;
`;
const Table = styled.table`
  flex: 1;
  width: 100%;
  table-layout: fixed;
  border-collapse: separate;
  border-spacing: 0;
`;
const Th = styled.th`
  height: 36px;
  padding: 0 0 0 10px;
  border-right: 1px solid #d1d1d6;
  border-bottom: 1px solid #c9c9d2;
  background: #fff;
  color: #55555b;
  font-size: 14px;
  font-weight: 600;
  text-align: left;
`;
const Tr = styled.tr`
  height: 35px;
  background: #fff;
  &:nth-child(odd) {
    background: #f4f4f7;
  }
  &:nth-child(3n) {
    height: 36px;
  }
`;
const Td = styled.td`
  padding: 0 0 0 ${(props) => (props.$indent ? 12 : 10)}px;
  overflow: hidden;
  color: ${(props) => (props.$muted ? "#616167" : "#1b1b1f")};
  ${(props) => props.$mono && `font-family: ${mono};`}
`;
const Flag = styled.span`
  display: flex;
  align-items: center;
  gap: 4px;
  font-size: 13px;
`;
const TableFooter = styled.div`
  height: 23px;
  padding-right: 12px;
  border-top: 1px solid #c9c9d2;
  background: #e8e8ed;
  color: #55555b;
  font: 14px/22px ${mono};
  text-align: right;
`;
const EventDetail = styled.aside`
  width: 383px;
  padding: 10px 18px;
  border-left: 2px solid #cdcdd6;
  background: #fff;
  color: #55555b;
  h3 {
    font-size: 14px;
    font-weight: 600;
  }
  p {
    margin-top: 24px;
    text-align: center;
  }
`;

const TaskRow = styled.div`
  display: flex;
  align-items: center;
  height: 40px;
  padding: 0 16px 0 13px;
  gap: 18px;
`;
const Dot = styled.span`
  width: 10px;
  height: 10px;
  margin-right: -10px;
  border-radius: 50%;
  background: #616167;
`;
const TaskButton = styled.button`
  display: flex;
  align-items: center;
  justify-content: center;
  width: 20px;
  height: 32px;
`;

const InspectorTitle = styled.div`
  display: flex;
  align-items: center;
  height: 54px;
  flex: none;
  gap: 7px;
  padding: 0 10px 0 9px;
  border-bottom: 1px solid #cdcdd6;
  strong {
    flex: 1;
    overflow: hidden;
  }
`;
const NodeButton = styled.button`
  width: 57px;
  height: 32px;
  padding-bottom: 6px;
  border: 2px solid #0f6cbd;
  border-radius: 14px;
  background: #e0eefa;
  font-size: 14px;
  line-height: 20px;
`;
const CopyButton = styled.button`
  display: flex;
  align-items: center;
  justify-content: center;
  width: 35px;
  height: 32px;
  border: 1px solid #cdcdd3;
  border-radius: 4px;
  background: #fff;
`;
const FilterInput = styled.input`
  flex: none;
  height: 33px;
  margin: 8px 10px 4px;
  padding: 0 9px 2px;
  border: 1px solid #cdcdd3;
  border-radius: 4px;
  background: #fff;
  outline: 0;
  font-size: 15px;
  &::placeholder {
    color: #616167;
  }
`;
const InspectorArea = styled.div`
  flex: 1;
  min-height: 0;
  display: flex;
  padding-right: 2px;
`;
const InspectorBody = styled.div`
  flex: 1;
  min-width: 0;
  overflow: hidden;
`;
const Section = styled.div`
  display: flex;
  align-items: center;
  gap: 12px;
  height: ${(props) => props.$height}px;
  padding-left: 11px;
  font-weight: ${(props) => (props.$bold ? 600 : 400)};
  > svg {
    color: #616167;
  }
`;
const BootTitle = styled.span`
  display: flex;
  align-items: center;
  gap: 10px;
  padding-left: 3px;
  font-size: 15px;
`;
const FieldList = styled.dl`
  font-size: 15px;
  dt {
    color: #616167;
  }
`;
const PropertyList = styled(FieldList)`
  padding-top: 2px;
`;
const Property = styled.div`
  display: grid;
  grid-template-columns: 147px 240px;
  min-height: 38px;
  padding: 4px 0 0 10px;
  dd {
    white-space: normal;
  }
`;
const Rule = styled.hr`
  margin: 9px 2px 0 0;
  border: 0;
  border-top: 1px solid #cdcdd6;
`;
const Field = styled.div`
  display: grid;
  grid-template-columns: 142px 196px 39px;
  min-height: 38px;
  padding: 3px 0 0 26px;
  line-height: 24px;
  &:nth-child(4n) {
    min-height: 37px;
  }
`;
const FieldValue = styled.dd`
  display: flex;
  align-items: center;
  align-self: start;
  gap: 7px;
  svg {
    margin-left: 3px;
  }
  ${(props) => props.$wide && "grid-column: 2 / 4;"}
  ${(props) =>
    props.$mono &&
    css`
      padding: 1px 40px 1px 0;
      font: 16px/19px ${mono};
      white-space: normal;
    `}
`;
const GoCell = styled.dd`
  display: flex;
  align-items: flex-start;
`;
const GoButton = styled.button`
  width: 39px;
  height: 25px;
  border: 1px solid #cdcdd3;
  border-radius: 4px;
  background: #fff;
  line-height: 20px;
`;

const StatusBar = styled.footer`
  display: flex;
  align-items: center;
  gap: 19px;
  height: 29px;
  flex: none;
  padding: 0 10px;
  background: #0f6cbd;
  color: #fff;
  font-size: 15px;
`;
const Sector = styled.span`
  margin-left: 36px;
`;
